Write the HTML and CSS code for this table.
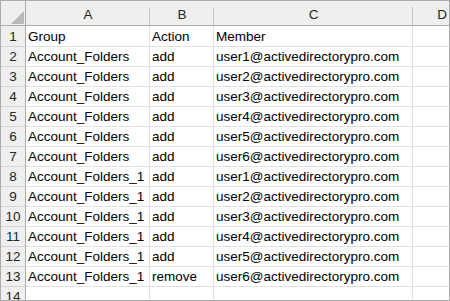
FILE: index.html
```html
<!DOCTYPE html>
<html>
<head>
<meta charset="utf-8">
<link rel="stylesheet" href="styles.css">
</head>
<body>
<div class="sheet">
  <div class="grid">
    <div class="corner"><svg width="24" height="24" viewBox="0 0 24 24"><polygon points="10,23 23,23 23,10" fill="#b9b9b9"/></svg></div>
    <div class="colhead">A</div>
    <div class="colhead">B</div>
    <div class="colhead">C</div>
    <div class="colhead last">D</div>

    <div class="rowhead first">1</div><div class="cell first">Group</div><div class="cell first">Action</div><div class="cell first">Member</div><div class="cell first last"></div>
    <div class="rowhead">2</div><div class="cell">Account_Folders</div><div class="cell">add</div><div class="cell">user1@activedirectorypro.com</div><div class="cell last"></div>
    <div class="rowhead">3</div><div class="cell">Account_Folders</div><div class="cell">add</div><div class="cell">user2@activedirectorypro.com</div><div class="cell last"></div>
    <div class="rowhead">4</div><div class="cell">Account_Folders</div><div class="cell">add</div><div class="cell">user3@activedirectorypro.com</div><div class="cell last"></div>
    <div class="rowhead">5</div><div class="cell">Account_Folders</div><div class="cell">add</div><div class="cell">user4@activedirectorypro.com</div><div class="cell last"></div>
    <div class="rowhead">6</div><div class="cell">Account_Folders</div><div class="cell">add</div><div class="cell">user5@activedirectorypro.com</div><div class="cell last"></div>
    <div class="rowhead">7</div><div class="cell">Account_Folders</div><div class="cell">add</div><div class="cell">user6@activedirectorypro.com</div><div class="cell last"></div>
    <div class="rowhead">8</div><div class="cell">Account_Folders_1</div><div class="cell">add</div><div class="cell">user1@activedirectorypro.com</div><div class="cell last"></div>
    <div class="rowhead">9</div><div class="cell">Account_Folders_1</div><div class="cell">add</div><div class="cell">user2@activedirectorypro.com</div><div class="cell last"></div>
    <div class="rowhead">10</div><div class="cell">Account_Folders_1</div><div class="cell">add</div><div class="cell">user3@activedirectorypro.com</div><div class="cell last"></div>
    <div class="rowhead">11</div><div class="cell">Account_Folders_1</div><div class="cell">add</div><div class="cell">user4@activedirectorypro.com</div><div class="cell last"></div>
    <div class="rowhead">12</div><div class="cell">Account_Folders_1</div><div class="cell">add</div><div class="cell">user5@activedirectorypro.com</div><div class="cell last"></div>
    <div class="rowhead">13</div><div class="cell">Account_Folders_1</div><div class="cell">remove</div><div class="cell">user6@activedirectorypro.com</div><div class="cell last"></div>
    <div class="rowhead">14</div><div class="cell"></div><div class="cell"></div><div class="cell"></div><div class="cell last"></div>
  </div>
</div>
</body>
</html>
```
FILE: styles.css
```css
html, body {
  margin: 0;
  padding: 0;
  background: #ffffff;
}
.sheet {
  width: 450px;
  height: 301px;
  box-sizing: border-box;
  border: 1px solid #ababab;
  overflow: hidden;
  font-family: "Liberation Sans", Arial, sans-serif;
  font-size: 13.5px;
  color: #000000;
}
.grid {
  display: grid;
  grid-template-columns: 25px 124px 64px 199px 58px;
  grid-template-rows: 25px 21px repeat(12, 20px) 20px;
  width: 470px;
}
.corner {
  background: #efefef;
  border-right: 1px solid #ababab;
  border-bottom: 1px solid #ababab;
  box-sizing: border-box;
  display: flex;
}
.colhead {
  background-color: #efefef;
  background-image: linear-gradient(#c6c6c6, #c6c6c6);
  background-size: 1px 18px;
  background-position: right bottom;
  background-repeat: no-repeat;
  border-bottom: 1px solid #ababab;
  box-sizing: border-box;
  display: flex;
  align-items: center;
  justify-content: center;
  padding-top: 2px;
  color: #262626;
}
.colhead.last {
  background-image: none;
}
.rowhead {
  background: #efefef;
  border-right: 1px solid #ababab;
  border-bottom: 1px solid #d4d4d4;
  box-sizing: border-box;
  display: flex;
  align-items: center;
  justify-content: center;
  color: #262626;
}
.cell {
  border-right: 1px solid #e1e1e1;
  border-bottom: 1px solid #e1e1e1;
  box-sizing: border-box;
  display: flex;
  align-items: center;
  padding-left: 2px;
  white-space: nowrap;
  overflow: hidden;
}
.cell.last {
  border-right: none;
}
```
